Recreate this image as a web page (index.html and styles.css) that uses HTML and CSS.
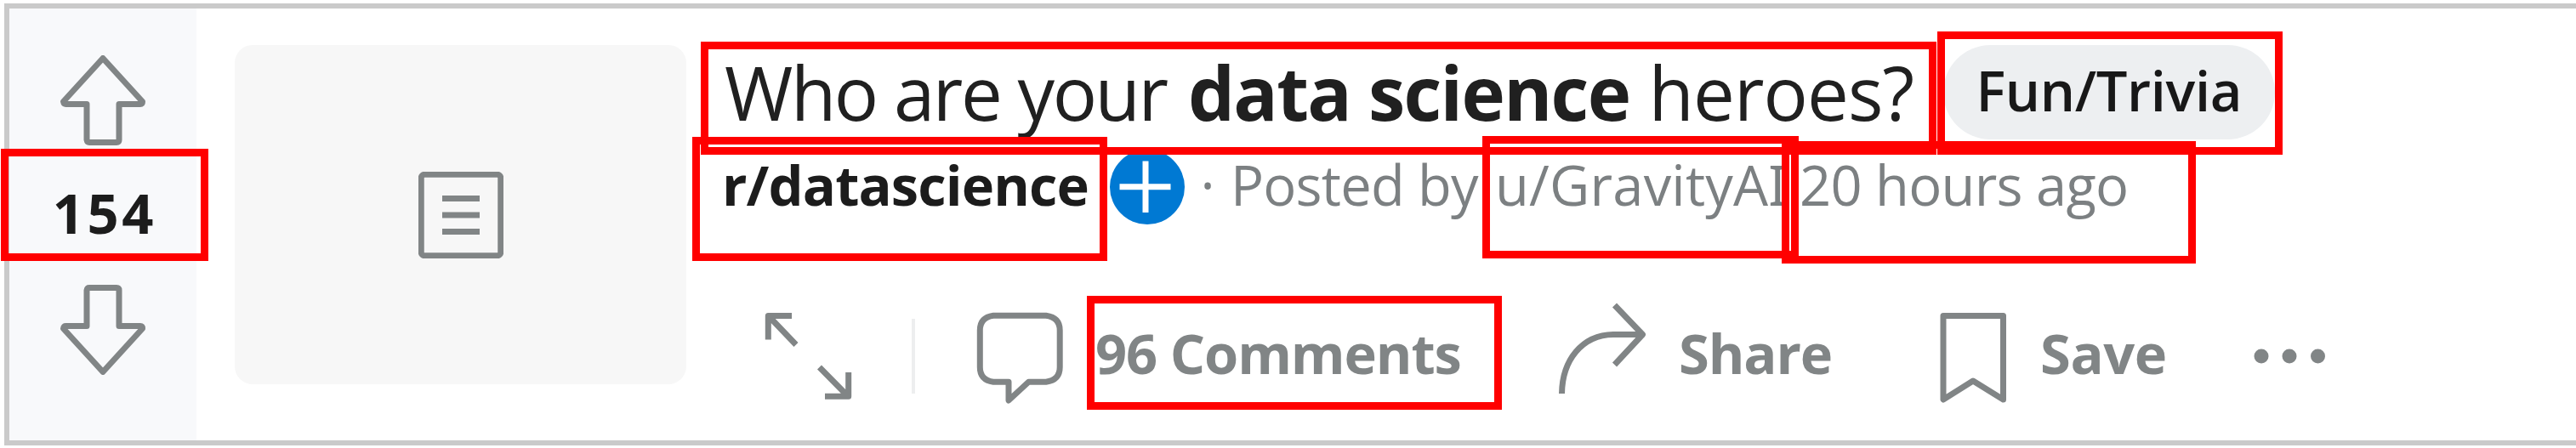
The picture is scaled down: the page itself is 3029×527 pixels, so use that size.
FILE: index.html
```html
<!DOCTYPE html>
<html lang="en">
<head>
<meta charset="utf-8">
<title>Who are your data science heroes?</title>
<link rel="stylesheet" href="styles.css">
</head>
<body>
<article class="post">
  <aside class="votes">
    <svg class="icon arrow" viewBox="71 65 100 106"><path d="M121 68.5L74.500 119.500Q75 122.500 77.500 122.500H102V164.500Q102.500 167.500 105 167.500H137Q140 167.500 140 164.500V122.500H165Q167.500 122.500 167.500 119.500Z"/></svg>
    <span class="score">154</span>
    <svg class="icon arrow down" viewBox="71 65 100 106"><path d="M121 68.5L74.500 119.500Q75 122.500 77.500 122.500H102V164.500Q102.500 167.500 105 167.500H137Q140 167.500 140 164.500V122.500H165Q167.500 122.500 167.500 119.500Z"/></svg>
  </aside>
  <div class="thumb">
    <svg class="icon text-icon" viewBox="0 0 100 102"><rect x="3.250" y="3.250" width="93.500" height="95.500" rx="4"/><path d="M28 31.500H72M28 51H72M28 70.500H72"/></svg>
  </div>
  <div class="content">
    <h1 class="title">
      <span class="t-who">Who are your</span><b class="t-data">data science</b><span class="t-heroes">heroes?</span><span class="flair">Fun/Trivia</span>
    </h1>
    <div class="meta">
      <b class="sub">r/datascience</b>
      <svg class="join" viewBox="0 0 88 88"><circle cx="44" cy="44" r="44"/><path d="M11.500 43.800H71.500M42 13.500V74"/></svg>
      <span class="dot">·</span>
      <span class="posted">Posted by</span>
      <span class="user">u/GravityA<span class="cap-i">I</span></span>
      <span class="time">20 hours ago</span>
    </div>
    <div class="actions">
      <svg class="icon expand" viewBox="849 348 223 134"><path d="M903.300 399.500V371.500H931M903.500 371.500L936 405.500M963.500 432L997.500 466.500M997.700 438V466.300H970"/></svg>
      <i class="divider"></i>
      <svg class="icon bubble" viewBox="1076 348 212 134"><path d="M1168 371.300H1230Q1246.200 373.500 1246.200 388.500V432Q1246.200 447 1230 449.200H1209.500L1186 471V449.200H1168Q1152.300 447 1152.300 432V388.500Q1152.300 373.500 1168 371.300Z"/></svg>
      <span class="label comments">96 Comments</span>
      <svg class="icon share-icon" viewBox="1820 348 154 134"><path d="M1836.500 463C1837 424 1860 394 1897 393.500H1931M1898.500 359L1931.500 393.500L1898.500 429"/></svg>
      <span class="label share">Share</span>
      <svg class="icon save-icon" viewBox="2270 348 129 134"><path d="M2285 371.500H2355.500V470L2320 448L2285 470Z"/></svg>
      <span class="label save">Save</span>
      <svg class="more" viewBox="2650 348 84 134"><circle cx="2659" cy="419" r="8.500"/><circle cx="2692" cy="419" r="8.500"/><circle cx="2725.500" cy="419" r="8.500"/></svg>
    </div>
  </div>
</article>
<div class="mark mark-score"></div>
<div class="mark mark-title"></div>
<div class="mark mark-flair"></div>
<div class="mark mark-sub"></div>
<div class="mark mark-user"></div>
<div class="mark mark-time"></div>
<div class="mark mark-comments"></div>
</body>
</html>
```

FILE: styles.css
```css
* { box-sizing: border-box; }
body {
  position: relative;
  height: 527px;
  margin: 0;
  padding: 4px 0 0 5px;
  overflow: hidden;
  background: #fff;
  color: #1c1c1c;
  font: 65px/88px "Open Sans", "Noto Sans", sans-serif;
}
.post {
  display: flex;
  height: 520px;
  border: 6px solid #cacaca;
  border-right: 0;
}
svg { display: block; flex: none; }
.icon {
  fill: none;
  stroke: #818586;
  stroke-width: 7;
  stroke-linejoin: round;
}
span, b { flex: none; white-space: nowrap; }

/* Vote column */
.votes {
  display: flex;
  flex: none;
  flex-direction: column;
  align-items: center;
  width: 220px;
  padding-top: 55px;
  background: #f8f9fb;
}
.arrow { width: 100px; height: 106px; }
.down { margin-top: 6px; transform: scaleY(-1); }
.score {
  padding-left: 4px;
  font-weight: 700;
  line-height: 158px;
  letter-spacing: 3.6px;
}

.thumb {
  display: flex;
  flex: none;
  align-items: center;
  justify-content: center;
  width: 531px;
  height: 399px;
  margin: 43px 42px 0 45px;
  border-radius: 21px;
  background: #f7f7f7;
}
.text-icon { width: 100px; height: 102px; }

/* Headline */
.content { flex: 1; padding-top: 43px; }
.title {
  display: flex;
  height: 111px;
  margin: 0 0 12px 3px;
  color: #202020;
  font-size: 87px;
  font-weight: 400;
  line-height: 111px;
}
.t-who { width: 545px; letter-spacing: -2.43px; }
.t-data { width: 541.5px; letter-spacing: -1.7px; }
.t-heroes { width: 346.5px; letter-spacing: -0.9px; }
.flair {
  width: 390px;
  padding-left: 38.5px;
  border-radius: 56px;
  background: #edeff1;
  color: #181818;
  font-size: 65px;
  font-weight: 600;
  line-height: 106px;
  letter-spacing: -0.34px;
}

/* Byline */
.meta {
  display: flex;
  height: 88px;
  color: #7c8082;
  line-height: 83px;
}
.sub { width: 456px; color: #1c1c1c; letter-spacing: -0.9px; }
.join { width: 88px; height: 88px; fill: #0079d3; stroke: #fff; stroke-width: 7; }
.join circle { stroke: none; }
.dot { width: 54px; text-align: center; }
.posted { width: 311px; letter-spacing: -0.79px; }
.user { width: 358px; letter-spacing: 0.2px; }
.cap-i { font-family: "Noto Sans", sans-serif; }
.time { letter-spacing: -0.72px; }

/* Action bar */
.actions {
  display: flex;
  align-items: center;
  height: 134px;
  margin-top: 84px;
  color: #818586;
}
.actions svg { height: 134px; }
.label { font-weight: 700; line-height: 136px; }
.expand { width: 223px; }
.divider { flex: none; width: 4px; height: 88px; margin-top: 8px; background: #edeeef; }
.bubble { width: 212px; }
.comments { width: 532px; letter-spacing: -1.14px; }
.share-icon { width: 154px; }
.share { width: 296px; letter-spacing: -1.12px; }
.save-icon { width: 129px; }
.save { width: 251px; letter-spacing: -0.4px; }
.more { width: 84px; fill: #818586; }

/* Annotation frames over the card */
.mark { position: absolute; border: 9px solid #f00; }
.mark-score { left: 1px; top: 175px; width: 244px; height: 132px; }
.mark-title { left: 824px; top: 49px; width: 1453px; height: 133px; }
.mark-flair { left: 2278px; top: 37px; width: 406px; height: 145px; }
.mark-sub { left: 814px; top: 161px; width: 488px; height: 146px; }
.mark-user { left: 1743px; top: 160px; width: 372px; height: 144px; }
.mark-time { left: 2095px; top: 166px; width: 487px; height: 144px; }
.mark-comments { left: 1278px; top: 348px; width: 488px; height: 134px; }
```
